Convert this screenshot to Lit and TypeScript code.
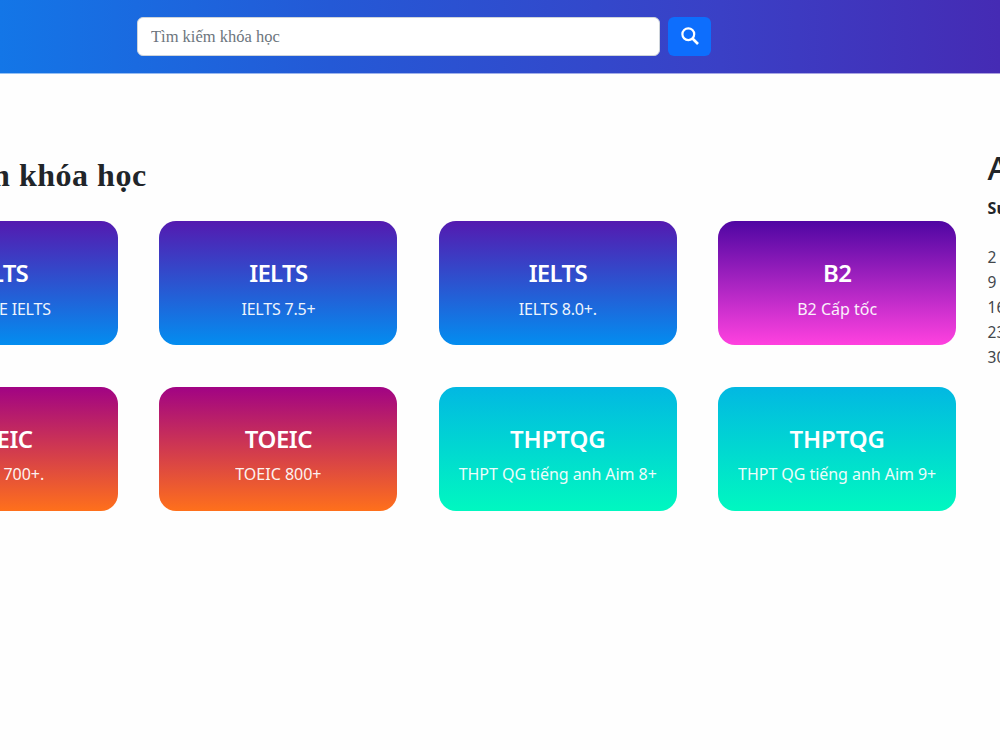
import { LitElement, html, css } from "lit";
import { customElement } from "lit/decorators.js";

interface Course {
  name: string;
  detail: string;
  kind: "ielts" | "b2" | "toeic" | "thpt";
}

const COURSES: Course[] = [
  { name: "IELTS", detail: "Học PRE IELTS", kind: "ielts" },
  { name: "IELTS", detail: "IELTS 7.5+", kind: "ielts" },
  { name: "IELTS", detail: "IELTS 8.0+.", kind: "ielts" },
  { name: "B2", detail: "B2 Cấp tốc", kind: "b2" },
  { name: "TOEIC", detail: "TOEIC 700+.", kind: "toeic" },
  { name: "TOEIC", detail: "TOEIC 800+", kind: "toeic" },
  { name: "THPTQG", detail: "THPT QG tiếng anh Aim 8+", kind: "thpt" },
  { name: "THPTQG", detail: "THPT QG tiếng anh Aim 9+", kind: "thpt" },
];

const DAYS = ["2", "9", "16", "23", "30"];

@customElement("app-root")
export class AppRoot extends LitElement {
  static styles = css`
    :host {
      display: block;
      height: 750px;
      overflow: hidden;
      background: #fefefe;
      color: #212529;
      font-family: "Noto Sans", sans-serif;
    }
    * {
      box-sizing: border-box;
    }
    .bar {
      display: flex;
      gap: 8px;
      height: 74px;
      padding: 17px 0 0 137px;
      border-bottom: 1px solid rgba(255, 255, 255, 0.55);
      background: linear-gradient(90deg, #1376e7 0%, #2459d6 33%, #3a40c6 72%, #452bb4 100%);
    }
    .search {
      width: 523px;
      height: 39px;
      padding: 1px 13px 0;
      border: 1px solid #ced4da;
      border-radius: 6px;
      background: #fff;
      font-family: "Liberation Serif", serif;
      font-size: 16.5px;
      color: #212529;
      outline: none;
    }
    .search::placeholder {
      color: #6c757d;
      opacity: 1;
    }
    .go {
      display: flex;
      align-items: center;
      justify-content: center;
      width: 43px;
      height: 39px;
      padding: 0 0 1px 1px;
      border: 0;
      border-radius: 6px;
      background: #0d6efd;
      color: #fff;
    }
    .main {
      display: flex;
      width: 1240px;
      margin-left: -120px;
    }
    .courses {
      flex: none;
      width: 1077px;
      padding-top: 81px;
    }
    .heading {
      display: flex;
      justify-content: flex-end;
      width: 266.6px;
      height: 40px;
      margin: 0 0 26.1px;
      white-space: nowrap;
      font: 700 32px/40px "Liberation Serif", serif;
      letter-spacing: 0.5px;
    }
    .grid {
      display: grid;
      grid-template-columns: repeat(4, 238px);
      grid-auto-rows: 124.2px;
      gap: 41.4px;
    }
    .card {
      display: flex;
      flex-direction: column;
      align-items: center;
      padding-top: 36.3px;
      border-radius: 17px;
      color: #fff;
      white-space: nowrap;
    }
    .ielts {
      background: linear-gradient(#541ab0, #038df0);
    }
    .b2 {
      background: linear-gradient(#4f06a3, #ff41df);
    }
    .toeic {
      background: linear-gradient(#a10384, #ff701b);
    }
    .thpt {
      background: linear-gradient(#02b8e2, #00f8c0);
    }
    .name {
      font-size: 24px;
      font-weight: 600;
      line-height: 32px;
    }
    .ielts .name {
      letter-spacing: -0.7px;
    }
    .b2 .name {
      letter-spacing: -0.7px;
    }
    .toeic .name {
      letter-spacing: -0.5px;
    }
    .thpt .name {
      letter-spacing: -0.1px;
    }
    .detail {
      margin-top: 6.4px;
      font-size: 16px;
      line-height: 26px;
      opacity: 0.93;
    }
    .ielts .detail {
      letter-spacing: -0.2px;
    }
    .thpt .detail {
      letter-spacing: -0.05px;
    }
    .calendar {
      padding: 74px 0 0 30.6px;
    }
    .month {
      height: 40px;
      font-size: 33px;
      font-weight: 500;
      line-height: 40px;
    }
    .weekday {
      margin-top: 8px;
      font-size: 16px;
      font-weight: 700;
      line-height: 25px;
    }
    .days {
      display: grid;
      grid-auto-rows: 24.8px;
      margin-top: 24.4px;
      font-size: 15.5px;
      line-height: 24.8px;
      color: #42474c;
    }
  `;

  render() {
    return html`
      <header class="bar">
        <input class="search" type="text" placeholder="Tìm kiếm khóa học" />
        <button class="go" aria-label="Tìm kiếm">
          <svg width="18" height="18" viewBox="0 0 18 18" fill="none" stroke="currentColor">
            <circle cx="7.3" cy="7.2" r="5.9" stroke-width="2.2" />
            <path d="M11.5 11.5 L17 17" stroke-width="2.7" />
          </svg>
        </button>
      </header>
      <main class="main">
        <section class="courses">
          <h2 class="heading">Tìm kiếm khóa học</h2>
          <div class="grid">
            ${COURSES.map(
              (c) => html`
                <div class="card ${c.kind}">
                  <div class="name">${c.name}</div>
                  <div class="detail">${c.detail}</div>
                </div>
              `
            )}
          </div>
        </section>
        <aside class="calendar">
          <div class="month">A</div>
          <div class="weekday">Su</div>
          <div class="days">${DAYS.map((d) => html`<span>${d}</span>`)}</div>
        </aside>
      </main>
    `;
  }
}
